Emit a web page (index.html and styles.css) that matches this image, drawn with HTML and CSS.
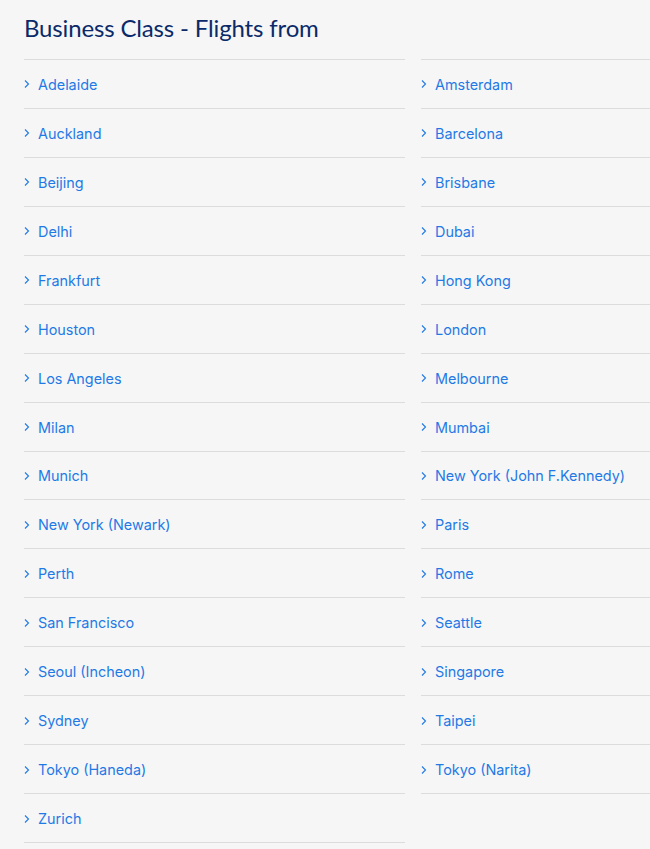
FILE: index.html
```html
<!DOCTYPE html>
<html lang="en">
<head>
<meta charset="utf-8">
<title>Business Class - Flights from</title>
<link rel="stylesheet" href="styles.css">
</head>
<body>
<main class="page">
  <h1 class="title">Business Class - Flights from</h1>
  <div class="columns">
    <ul class="list">
      <li class="item"><a class="link" href="#"><svg class="chev" viewBox="0 0 6 10" width="6" height="10"><path d="M1 1.5 L4.5 5 L1 8.5" /></svg>Adelaide</a></li>
      <li class="item"><a class="link" href="#"><svg class="chev" viewBox="0 0 6 10" width="6" height="10"><path d="M1 1.5 L4.5 5 L1 8.5" /></svg>Auckland</a></li>
      <li class="item"><a class="link" href="#"><svg class="chev" viewBox="0 0 6 10" width="6" height="10"><path d="M1 1.5 L4.5 5 L1 8.5" /></svg>Beijing</a></li>
      <li class="item"><a class="link" href="#"><svg class="chev" viewBox="0 0 6 10" width="6" height="10"><path d="M1 1.5 L4.5 5 L1 8.5" /></svg>Delhi</a></li>
      <li class="item"><a class="link" href="#"><svg class="chev" viewBox="0 0 6 10" width="6" height="10"><path d="M1 1.5 L4.5 5 L1 8.5" /></svg>Frankfurt</a></li>
      <li class="item"><a class="link" href="#"><svg class="chev" viewBox="0 0 6 10" width="6" height="10"><path d="M1 1.5 L4.5 5 L1 8.5" /></svg>Houston</a></li>
      <li class="item"><a class="link" href="#"><svg class="chev" viewBox="0 0 6 10" width="6" height="10"><path d="M1 1.5 L4.5 5 L1 8.5" /></svg>Los Angeles</a></li>
      <li class="item"><a class="link" href="#"><svg class="chev" viewBox="0 0 6 10" width="6" height="10"><path d="M1 1.5 L4.5 5 L1 8.5" /></svg>Milan</a></li>
      <li class="item"><a class="link" href="#"><svg class="chev" viewBox="0 0 6 10" width="6" height="10"><path d="M1 1.5 L4.5 5 L1 8.5" /></svg>Munich</a></li>
      <li class="item"><a class="link" href="#"><svg class="chev" viewBox="0 0 6 10" width="6" height="10"><path d="M1 1.5 L4.5 5 L1 8.5" /></svg>New York (Newark)</a></li>
      <li class="item"><a class="link" href="#"><svg class="chev" viewBox="0 0 6 10" width="6" height="10"><path d="M1 1.5 L4.5 5 L1 8.5" /></svg>Perth</a></li>
      <li class="item"><a class="link" href="#"><svg class="chev" viewBox="0 0 6 10" width="6" height="10"><path d="M1 1.5 L4.5 5 L1 8.5" /></svg>San Francisco</a></li>
      <li class="item"><a class="link" href="#"><svg class="chev" viewBox="0 0 6 10" width="6" height="10"><path d="M1 1.5 L4.5 5 L1 8.5" /></svg>Seoul (Incheon)</a></li>
      <li class="item"><a class="link" href="#"><svg class="chev" viewBox="0 0 6 10" width="6" height="10"><path d="M1 1.5 L4.5 5 L1 8.5" /></svg>Sydney</a></li>
      <li class="item"><a class="link" href="#"><svg class="chev" viewBox="0 0 6 10" width="6" height="10"><path d="M1 1.5 L4.5 5 L1 8.5" /></svg>Tokyo (Haneda)</a></li>
      <li class="item"><a class="link" href="#"><svg class="chev" viewBox="0 0 6 10" width="6" height="10"><path d="M1 1.5 L4.5 5 L1 8.5" /></svg>Zurich</a></li>
    </ul>
    <ul class="list">
      <li class="item"><a class="link" href="#"><svg class="chev" viewBox="0 0 6 10" width="6" height="10"><path d="M1 1.5 L4.5 5 L1 8.5" /></svg>Amsterdam</a></li>
      <li class="item"><a class="link" href="#"><svg class="chev" viewBox="0 0 6 10" width="6" height="10"><path d="M1 1.5 L4.5 5 L1 8.5" /></svg>Barcelona</a></li>
      <li class="item"><a class="link" href="#"><svg class="chev" viewBox="0 0 6 10" width="6" height="10"><path d="M1 1.5 L4.5 5 L1 8.5" /></svg>Brisbane</a></li>
      <li class="item"><a class="link" href="#"><svg class="chev" viewBox="0 0 6 10" width="6" height="10"><path d="M1 1.5 L4.5 5 L1 8.5" /></svg>Dubai</a></li>
      <li class="item"><a class="link" href="#"><svg class="chev" viewBox="0 0 6 10" width="6" height="10"><path d="M1 1.5 L4.5 5 L1 8.5" /></svg>Hong Kong</a></li>
      <li class="item"><a class="link" href="#"><svg class="chev" viewBox="0 0 6 10" width="6" height="10"><path d="M1 1.5 L4.5 5 L1 8.5" /></svg>London</a></li>
      <li class="item"><a class="link" href="#"><svg class="chev" viewBox="0 0 6 10" width="6" height="10"><path d="M1 1.5 L4.5 5 L1 8.5" /></svg>Melbourne</a></li>
      <li class="item"><a class="link" href="#"><svg class="chev" viewBox="0 0 6 10" width="6" height="10"><path d="M1 1.5 L4.5 5 L1 8.5" /></svg>Mumbai</a></li>
      <li class="item"><a class="link" href="#"><svg class="chev" viewBox="0 0 6 10" width="6" height="10"><path d="M1 1.5 L4.5 5 L1 8.5" /></svg>New York (John F.Kennedy)</a></li>
      <li class="item"><a class="link" href="#"><svg class="chev" viewBox="0 0 6 10" width="6" height="10"><path d="M1 1.5 L4.5 5 L1 8.5" /></svg>Paris</a></li>
      <li class="item"><a class="link" href="#"><svg class="chev" viewBox="0 0 6 10" width="6" height="10"><path d="M1 1.5 L4.5 5 L1 8.5" /></svg>Rome</a></li>
      <li class="item"><a class="link" href="#"><svg class="chev" viewBox="0 0 6 10" width="6" height="10"><path d="M1 1.5 L4.5 5 L1 8.5" /></svg>Seattle</a></li>
      <li class="item"><a class="link" href="#"><svg class="chev" viewBox="0 0 6 10" width="6" height="10"><path d="M1 1.5 L4.5 5 L1 8.5" /></svg>Singapore</a></li>
      <li class="item"><a class="link" href="#"><svg class="chev" viewBox="0 0 6 10" width="6" height="10"><path d="M1 1.5 L4.5 5 L1 8.5" /></svg>Taipei</a></li>
      <li class="item"><a class="link" href="#"><svg class="chev" viewBox="0 0 6 10" width="6" height="10"><path d="M1 1.5 L4.5 5 L1 8.5" /></svg>Tokyo (Narita)</a></li>
    </ul>
  </div>
</main>
</body>
</html>
```
FILE: styles.css
```css
html, body {
  margin: 0;
  padding: 0;
  background: #f6f6f6;
  overflow: hidden;
}
.page {
  padding: 0 0 0 24px;
  width: 778px;
}
.title {
  margin: 0;
  padding: 12px 0 0;
  height: 59px;
  box-sizing: border-box;
  font-family: "Lato", "Liberation Sans", sans-serif;
  font-weight: 400;
  font-size: 24px;
  letter-spacing: -0.15px;
  line-height: 32px;
  color: #0b2a6a;
}
.columns {
  display: grid;
  grid-template-columns: 381px 381px;
  column-gap: 16px;
  align-items: start;
}
.list {
  list-style: none;
  margin: 0;
  padding: 0;
  border-bottom: 1px solid #dcdcdc;
}
.item {
  border-top: 1px solid #dcdcdc;
}
.link {
  display: flex;
  align-items: center;
  box-sizing: border-box;
  height: 47.94px;
  padding-top: 1px;
  text-decoration: none;
  font-family: "Inter", "Liberation Sans", sans-serif;
  font-size: 14.4px;
  color: #1f7ae6;
}
.chev {
  width: 6px;
  height: 10px;
  margin: 0 8px 0 0;
  fill: none;
  stroke: #1f7ae6;
  stroke-width: 1.1;
}
```
